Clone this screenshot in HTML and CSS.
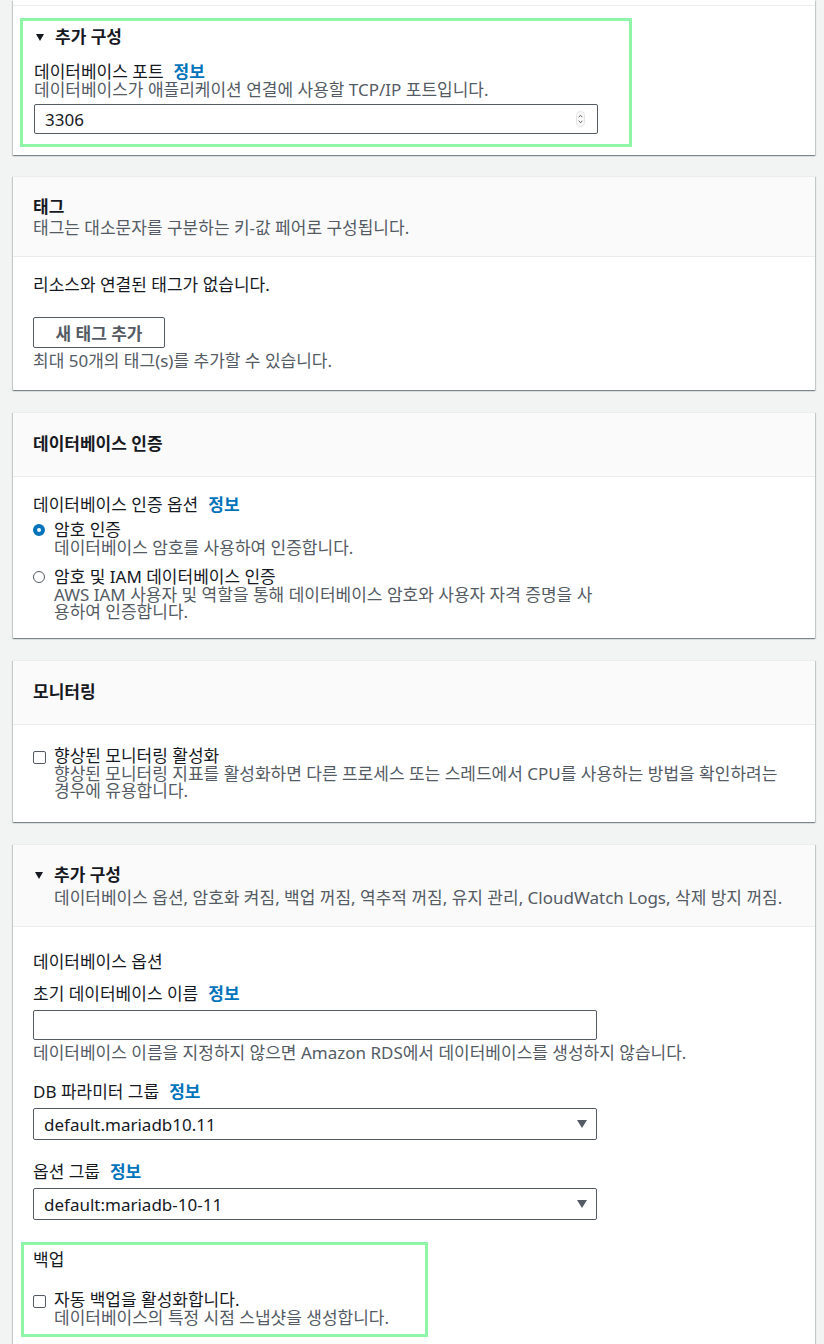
FILE: index.html
```html
<!DOCTYPE html>
<html lang="ko">
<head>
<meta charset="utf-8">
<title>RDS 데이터베이스 생성</title>
<link rel="stylesheet" href="styles.css">
</head>
<body>
<div class="page">

  <section class="card card-top">
    <div class="strip"></div>
    <div class="top-body">
      <div class="highlight hl-port">
        <div class="expander small">
          <svg class="tri" width="8" height="7" viewBox="0 0 8 7"><path d="M0 0H8L4 7Z"/></svg>
          <span>추가 구성</span>
        </div>
        <div class="label mt-16">데이터베이스 포트<a class="info">정보</a></div>
        <div class="desc">데이터베이스가 애플리케이션 연결에 사용할 TCP/IP 포트입니다.</div>
        <div class="input number">
          <span>3306</span>
          <svg class="spin" width="9" height="16" viewBox="0 0 9 16">
            <rect x="0.5" y="0.5" width="8" height="15" rx="4" fill="#fafafa" stroke="#e3e3e3"/>
            <path d="M2.6 6.2L4.5 4.3L6.4 6.2M2.6 9.8L4.5 11.7L6.4 9.8" fill="none" stroke="#555" stroke-width="1"/>
          </svg>
        </div>
      </div>
    </div>
  </section>

  <section class="card">
    <header class="card-header has-sub">
      <h2 class="card-title">태그</h2>
      <p class="card-sub">태그는 대소문자를 구분하는 키-값 페어로 구성됩니다.</p>
    </header>
    <div class="card-body tags-body">
      <p class="text">리소스와 연결된 태그가 없습니다.</p>
      <button class="btn">새 태그 추가</button>
      <p class="desc mt-4">최대 50개의 태그(s)를 추가할 수 있습니다.</p>
    </div>
  </section>

  <section class="card">
    <header class="card-header">
      <h2 class="card-title">데이터베이스 인증</h2>
    </header>
    <div class="card-body auth-body">
      <div class="label">데이터베이스 인증 옵션<a class="info">정보</a></div>
      <div class="option opt-1">
        <span class="radio checked"></span>
        <div class="option-text">
          <div class="label">암호 인증</div>
          <div class="desc tight">데이터베이스 암호를 사용하여 인증합니다.</div>
        </div>
      </div>
      <div class="option opt-2">
        <span class="radio"></span>
        <div class="option-text narrow">
          <div class="label">암호 및 IAM 데이터베이스 인증</div>
          <div class="desc tight">AWS IAM 사용자 및 역할을 통해 데이터베이스 암호와 사용자 자격 증명을 사용하여 인증합니다.</div>
        </div>
      </div>
    </div>
  </section>

  <section class="card">
    <header class="card-header">
      <h2 class="card-title">모니터링</h2>
    </header>
    <div class="card-body mon-body">
      <div class="option">
        <span class="checkbox"></span>
        <div class="option-text">
          <div class="label">향상된 모니터링 활성화</div>
          <div class="desc tight">향상된 모니터링 지표를 활성화하면 다른 프로세스 또는 스레드에서 CPU를 사용하는 방법을 확인하려는 경우에 유용합니다.</div>
        </div>
      </div>
    </div>
  </section>

  <section class="card card-last">
    <header class="card-header has-sub">
      <div class="expander">
        <svg class="tri" width="8" height="7" viewBox="0 0 8 7"><path d="M0 0H8L4 7Z"/></svg>
        <h2 class="card-title">추가 구성</h2>
      </div>
      <p class="card-sub indent">데이터베이스 옵션, 암호화 켜짐, 백업 꺼짐, 역추적 꺼짐, 유지 관리, CloudWatch Logs, 삭제 방지 꺼짐.</p>
    </header>
    <div class="card-body extra-body">
      <div class="label">데이터베이스 옵션</div>
      <div class="label mt-14">초기 데이터베이스 이름<a class="info">정보</a></div>
      <div class="input wide mt-7"></div>
      <div class="desc mt-4">데이터베이스 이름을 지정하지 않으면 Amazon RDS에서 데이터베이스를 생성하지 않습니다.</div>
      <div class="label mt-21">DB 파라미터 그룹<a class="info">정보</a></div>
      <div class="select mt-7">
        <span>default.mariadb10.11</span>
        <svg class="caret" width="10" height="8" viewBox="0 0 10 8"><path d="M0 0H10L5 8Z"/></svg>
      </div>
      <div class="label mt-23">옵션 그룹<a class="info">정보</a></div>
      <div class="select mt-7">
        <span>default:mariadb-10-11</span>
        <svg class="caret" width="10" height="8" viewBox="0 0 10 8"><path d="M0 0H10L5 8Z"/></svg>
      </div>
      <div class="highlight hl-backup">
        <div class="label">백업</div>
        <div class="option mt-22">
          <span class="checkbox"></span>
          <div class="option-text">
            <div class="label">자동 백업을 활성화합니다.</div>
            <div class="desc tight">데이터베이스의 특정 시점 스냅샷을 생성합니다.</div>
          </div>
        </div>
      </div>
    </div>
  </section>

</div>
</body>
</html>
```

FILE: styles.css
```css
html, body {
  margin: 0;
  padding: 0;
}

body {
  background: #f2f3f3;
  font-family: "Noto Sans", "Noto Sans CJK KR", sans-serif;
  font-size: 17px;
  color: #16191f;
}

p, h2 {
  margin: 0;
}

.page {
  padding: 0 9px 0 13px;
  height: 1344px;
  overflow: hidden;
}

.card {
  background: #fff;
  box-shadow: 0 1px 1px 0 rgba(0, 28, 36, 0.3), 1px 1px 1px 0 rgba(0, 28, 36, 0.15), -1px 1px 1px 0 rgba(0, 28, 36, 0.15);
  border-top: 1px solid #eaeded;
  margin-bottom: 22px;
}

.card-top {
  border-top: 0;
  margin-bottom: 21px;
}

.strip {
  height: 5px;
  border-bottom: 1px solid #eaeded;
}

.top-body {
  padding: 12px 20px 8px 7px;
}

.card-header {
  background: #fafafa;
  border-bottom: 1px solid #eaeded;
  padding: 18px 20px 19px;
}

.card-header.has-sub {
  padding: 19px 20px 19px;
}

.card-title {
  font-size: 17px;
  font-weight: 700;
  line-height: 26px;
}

.has-sub .card-title {
  line-height: 22px;
}

.card-sub {
  color: #545b64;
  line-height: 19px;
}

.card-sub.indent {
  padding-left: 21px;
  margin-top: 2px;
}

.card-body {
  padding: 0 20px;
}

.highlight {
  border: 3px solid #8ff5a8;
  box-sizing: border-box;
}

.hl-port {
  width: 612px;
  padding: 6px 11px 10px 11px;
}

.hl-backup {
  width: 407px;
  margin: 22px 0 0 -12px;
  padding: 6px 9px 8px 9px;
}

.expander {
  display: flex;
  align-items: center;
  line-height: 22px;
}

.expander.small {
  line-height: 20px;
  font-weight: 700;
  color: #16191f;
}

.tri {
  fill: #16191f;
  margin: 0 11px 0 2px;
  flex: none;
}

.label {
  line-height: 18px;
}

.info {
  color: #0073bb;
  font-weight: 700;
  margin-left: 10px;
  text-decoration: none;
}

.desc {
  color: #545b64;
  line-height: 18px;
}

.desc.tight {
  line-height: 17px;
}

.text {
  line-height: 18px;
}

.input,
.select {
  box-sizing: border-box;
  width: 564px;
  border: 1px solid #545b64;
  border-radius: 2px;
  display: flex;
  align-items: center;
  justify-content: space-between;
  padding: 0 9px 0 10px;
  background: #fff;
}

.input {
  height: 30px;
}

.input.number {
  margin-top: 5px;
  padding-right: 12px;
}

.select {
  height: 32px;
}

.caret {
  fill: #545b64;
  flex: none;
}

.spin {
  flex: none;
}

.tags-body {
  padding-top: 19px;
  padding-bottom: 20px;
}

.btn {
  display: block;
  margin-top: 23px;
  height: 31px;
  width: 132px;
  box-sizing: border-box;
  border: 1px solid #545b64;
  border-radius: 2px;
  background: #fff;
  color: #545b64;
  font-family: inherit;
  font-size: 17px;
  font-weight: 700;
  padding: 0;
}

.auth-body {
  padding-top: 19px;
  padding-bottom: 18px;
}

.option {
  display: flex;
  align-items: flex-start;
}

.opt-1 {
  margin-top: 7px;
}

.opt-2 {
  margin-top: 12px;
}

.option-text.narrow {
  width: 548px;
}

.radio {
  flex: none;
  box-sizing: border-box;
  width: 12px;
  height: 12px;
  border-radius: 50%;
  border: 1px solid #545b64;
  margin: 3px 9px 0 0;
  background: #fff;
}

.radio.checked {
  border: 4px solid #0073bb;
}

.checkbox {
  flex: none;
  box-sizing: border-box;
  width: 13px;
  height: 13px;
  border: 1px solid #545b64;
  border-radius: 2px;
  margin: 4px 8px 0 0;
  background: #fff;
}

.mon-body {
  padding-top: 22px;
  padding-bottom: 23px;
}

.extra-body {
  padding-top: 26px;
  padding-bottom: 40px;
}

.mt-4 { margin-top: 4px; }
.mt-7 { margin-top: 7px; }
.mt-14 { margin-top: 14px; }
.mt-16 { margin-top: 16px; }
.mt-21 { margin-top: 21px; }
.mt-22 { margin-top: 22px; }
.mt-23 { margin-top: 23px; }
```
